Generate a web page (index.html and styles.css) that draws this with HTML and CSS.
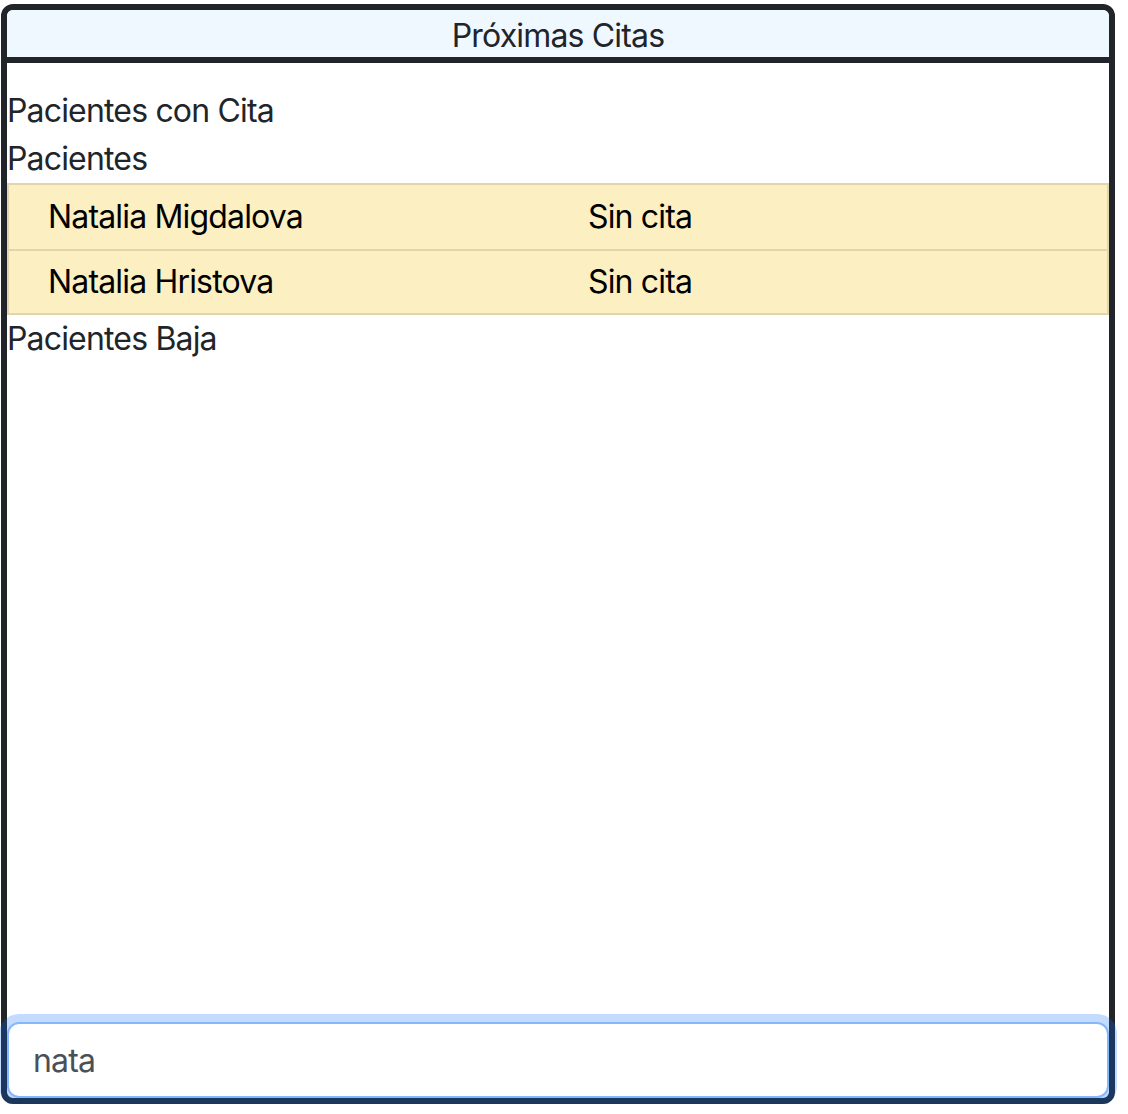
FILE: index.html
```html
<!DOCTYPE html>
<html lang="es">
<head>
<meta charset="utf-8">
<title>Próximas Citas</title>
<link rel="stylesheet" href="styles.css">
</head>
<body>
<div class="card">
  <div class="card-header">Próximas Citas</div>
  <div class="card-body">
    <div class="section-title">Pacientes con Cita</div>
    <div class="section-title">Pacientes</div>
    <div class="patient-list">
      <div class="patient-row">
        <div class="cell">Natalia Migdalova</div>
        <div class="cell">Sin cita</div>
      </div>
      <div class="patient-row">
        <div class="cell">Natalia Hristova</div>
        <div class="cell">Sin cita</div>
      </div>
    </div>
    <div class="section-title">Pacientes Baja</div>
  </div>
  <input class="search-input" type="text" value="nata">
</div>
</body>
</html>
```

FILE: styles.css
```css
html, body {
  margin: 0;
  padding: 0;
  background: #ffffff;
}

body {
  font-family: "Inter", "Noto Sans", "Liberation Sans", sans-serif;
  font-size: 32px;
  line-height: 48px;
  letter-spacing: -0.026em;
  color: #212529;
}

.card {
  box-sizing: border-box;
  width: 1114px;
  height: 1100px;
  margin: 4px 0 0 1px;
  border: 6px solid #212529;
  border-radius: 12px;
  display: flex;
  flex-direction: column;
  background: #ffffff;
}

.card-header {
  height: 45px;
  padding-top: 2px;
  line-height: 47px;
  text-align: center;
  background: #f0f8ff;
  border-bottom: 6px solid #212529;
  border-radius: 6px 6px 0 0;
}

.card-body {
  flex: 1;
  padding-top: 24px;
}

.section-title {
  height: 48px;
}

.patient-list {
  display: flex;
  flex-direction: column;
}

.patient-row {
  box-sizing: border-box;
  display: grid;
  grid-template-columns: 540px 1fr;
  height: 66px;
  align-items: center;
  background: #fcefc1;
  border: 2px solid #e0d5ad;
  border-bottom: none;
  color: #000000;
}

.patient-row:last-child {
  border-bottom: 2px solid #e0d5ad;
}

.cell {
  padding-left: 39px;
}

.search-input {
  box-sizing: border-box;
  display: block;
  width: 100%;
  height: 76px;
  margin: 0;
  padding: 0 24px;
  font-family: inherit;
  font-size: 32px;
  letter-spacing: -0.026em;
  color: #495057;
  background: #ffffff;
  border: 2px solid #86b7fe;
  border-radius: 12px;
  box-shadow: 0 0 0 8px rgba(13, 110, 253, 0.25);
  outline: none;
}
```
